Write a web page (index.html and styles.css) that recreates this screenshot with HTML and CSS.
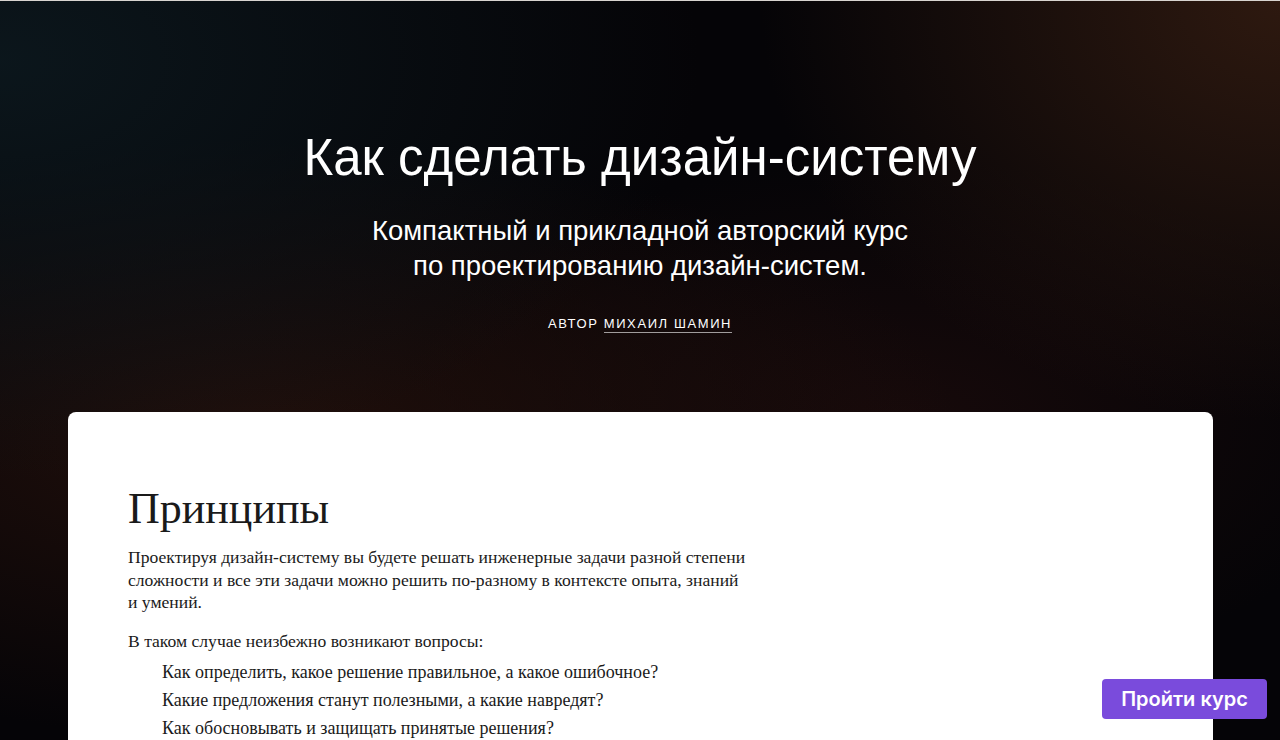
FILE: index.html
```html
<!DOCTYPE html>
<html lang="ru">
<head>
<meta charset="utf-8">
<title>Как сделать дизайн-систему</title>
<link rel="stylesheet" href="styles.css">
</head>
<body>
<header class="hero">
  <h1 class="hero-title">Как сделать дизайн-систему</h1>
  <p class="hero-sub">Компактный и прикладной авторский курс<br>по проектированию дизайн-систем.</p>
  <p class="hero-author">Автор <a class="hero-author-link" href="#">Михаил Шамин</a></p>
</header>
<main class="card">
  <h2 class="card-title">Принципы</h2>
  <p class="card-text">Проектируя дизайн-систему вы будете решать инженерные задачи разной степени сложности и все эти задачи можно решить по-разному в контексте опыта, знаний и умений.</p>
  <p class="card-text card-lead">В таком случае неизбежно возникают вопросы:</p>
  <ul class="questions">
    <li>Как определить, какое решение правильное, а какое ошибочное?</li>
    <li>Какие предложения станут полезными, а какие навредят?</li>
    <li>Как обосновывать и защищать принятые решения?</li>
  </ul>
</main>
<a class="cta" href="#">Пройти курс</a>
</body>
</html>
```
FILE: styles.css
```css
html, body {
  margin: 0;
  padding: 0;
}
body {
  background-color: #050407;
  background-image:
    radial-gradient(ellipse 520px 420px at 1280px 0px, rgba(48, 26, 16, 0.95), rgba(48, 26, 16, 0) 100%),
    radial-gradient(ellipse 700px 420px at 0px 60px, rgba(12, 24, 30, 0.9), rgba(12, 24, 30, 0) 100%),
    radial-gradient(ellipse 700px 300px at 260px 440px, rgba(40, 18, 12, 0.8), rgba(40, 18, 12, 0) 100%),
    radial-gradient(ellipse 500px 260px at 900px 420px, rgba(30, 12, 12, 0.7), rgba(30, 12, 12, 0) 100%);
  background-repeat: no-repeat;
  border-top: 1px solid #d8d4d0;
  box-sizing: border-box;
  overflow: hidden;
  height: 740px;
}
.hero {
  text-align: center;
  color: #fff;
  padding-top: 127px;
  height: 411px;
  box-sizing: border-box;
  font-family: "Liberation Sans", Arial, sans-serif;
}
.hero-title {
  margin: 0;
  font-size: 51px;
  font-weight: 400;
  line-height: 60px;
}
.hero-sub {
  margin: 25px 0 0;
  font-size: 27.5px;
  line-height: 35px;
}
.hero-author {
  margin: 33px 0 0;
  font-size: 13px;
  letter-spacing: 1.6px;
  text-transform: uppercase;
  line-height: 16px;
}
.hero-author-link {
  color: #fff;
  text-decoration: none;
  border-bottom: 1px solid rgba(255, 255, 255, 0.6);
  padding-bottom: 1px;
}
.card {
  margin: 0 67px 0 68px;
  background: #fff;
  border-radius: 8px;
  padding: 72px 60px 40px;
  height: 400px;
  font-family: "Liberation Serif", "Times New Roman", serif;
  color: #1a1a1a;
}
.card-title {
  margin: 0 0 12px;
  font-size: 44px;
  font-weight: 400;
  line-height: 50px;
}
.card-text {
  margin: 0;
  max-width: 620px;
  font-size: 17.6px;
  line-height: 22.5px;
}
.card-lead {
  margin-top: 16px;
}
.questions {
  list-style: none;
  margin: 6px 0 0;
  padding: 0 0 0 34px;
  font-size: 18px;
  line-height: 28px;
}
.cta {
  position: fixed;
  right: 13px;
  bottom: 21px;
  width: 165px;
  height: 40px;
  box-sizing: border-box;
  display: flex;
  align-items: center;
  justify-content: center;
  background: #7a4bdc;
  color: #fff;
  border-radius: 4px;
  font-family: Inter, "Liberation Sans", sans-serif;
  font-weight: 600;
  font-size: 20px;
  text-decoration: none;
}
```
